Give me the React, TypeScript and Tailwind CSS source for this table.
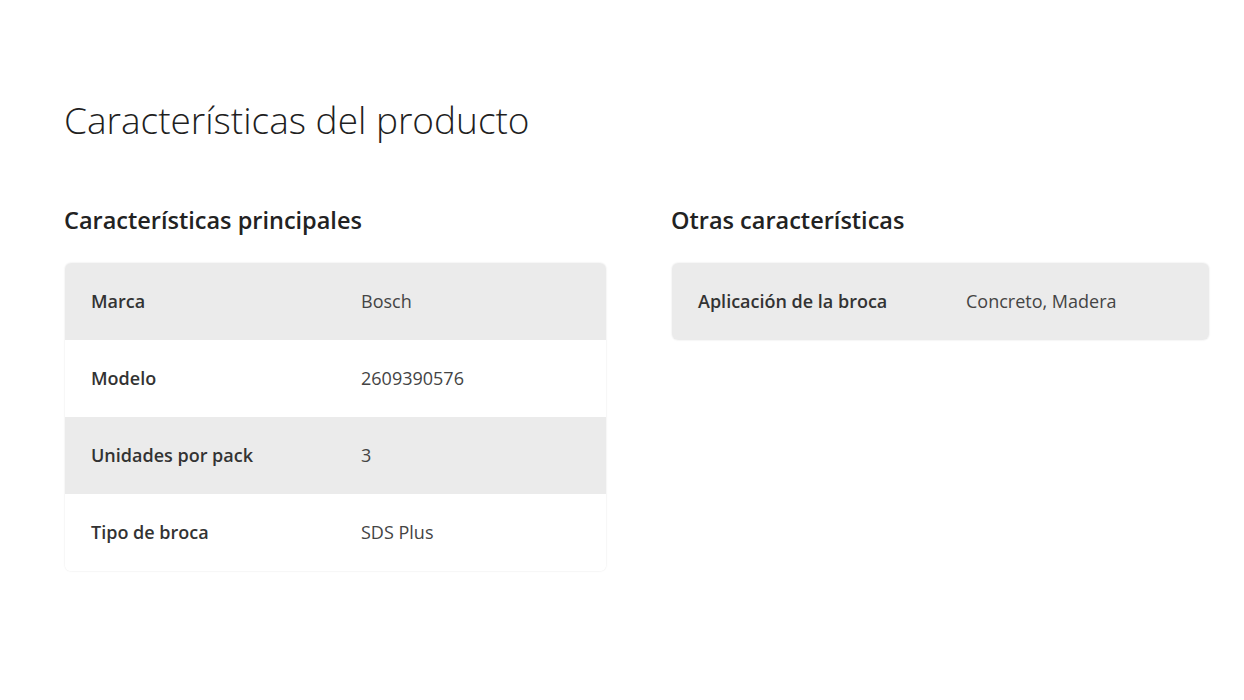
const principales = [
  { label: "Marca", value: "Bosch" },
  { label: "Modelo", value: "2609390576" },
  { label: "Unidades por pack", value: "3" },
  { label: "Tipo de broca", value: "SDS Plus" },
];

const otras = [{ label: "Aplicación de la broca", value: "Concreto, Madera" }];

type Row = { label: string; value: string };

const SpecTable = ({ rows, valueCol }: { rows: Row[]; valueCol: string }) => (
  <div className="rounded-md overflow-hidden shadow-[0_0_2px_rgba(0,0,0,0.12)]">
    {rows.map((r, i) => (
      <div
        key={r.label}
        className={`flex items-center h-[77px] px-[26px] ${i % 2 === 0 ? "bg-[#ebebeb]" : "bg-white"}`}
      >
        <div className={`${valueCol} shrink-0 text-[18px] font-semibold text-[#333333]`}>{r.label}</div>
        <div className="text-[18px] text-[#444444]">{r.value}</div>
      </div>
    ))}
  </div>
);

export default function App() {
  return (
    <div className="min-h-[700px] bg-white pl-[64px] pt-[95px] font-['Open_Sans',sans-serif] text-[#222222]">
      <h1 className="text-[37px] font-light leading-[50px] text-[#1f1f1f]">Características del producto</h1>
      <div className="mt-[60px] grid grid-cols-[542px_538px] gap-[65px]">
        <div>
          <h2 className="text-[23.5px] font-semibold leading-[30px] text-[#222222]">Características principales</h2>
          <div className="mt-[28px] ml-px">
            <SpecTable rows={principales} valueCol="w-[270px]" />
          </div>
        </div>
        <div>
          <h2 className="text-[23.5px] font-semibold leading-[30px] text-[#222222]">Otras características</h2>
          <div className="mt-[28px] ml-px">
            <SpecTable rows={otras} valueCol="w-[268px]" />
          </div>
        </div>
      </div>
    </div>
  );
}
